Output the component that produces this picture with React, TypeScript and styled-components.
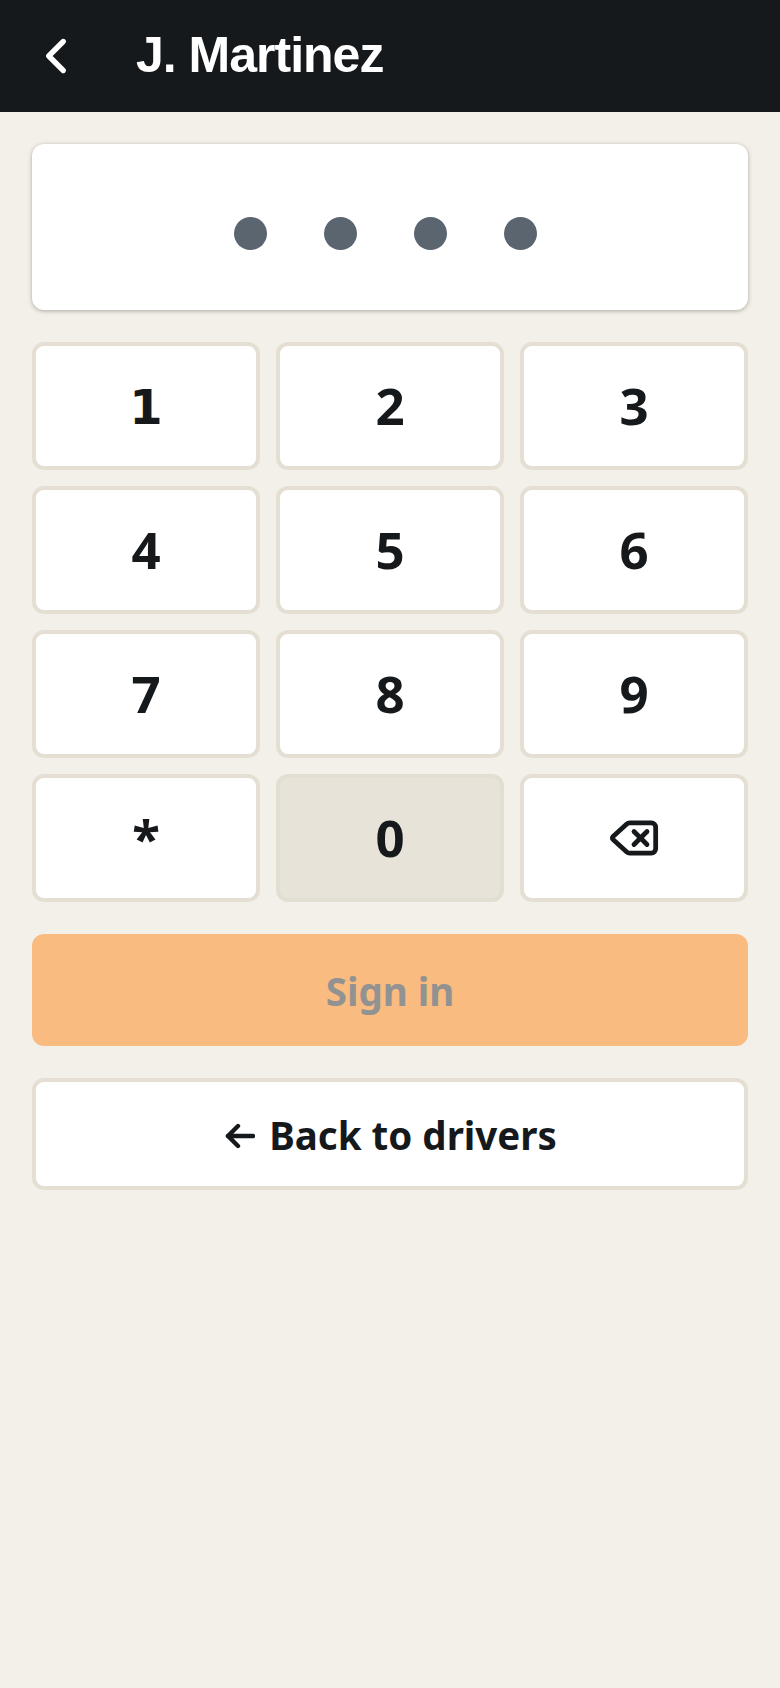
import React from "react";
import styled, { createGlobalStyle } from "styled-components";
import { ChevronLeft, Delete } from "lucide-react";

const GlobalStyle = createGlobalStyle`
  html, body {
    margin: 0;
    padding: 0;
    background: #f3f0e9;
  }

  * {
    box-sizing: border-box;
  }
`;

const Page = styled.div`
  min-height: 1688px;
  background: #f3f0e9;
  font-family: "Noto Sans", "Liberation Sans", sans-serif;
  color: #16191c;
`;

const Header = styled.header`
  height: 112px;
  background: #16191c;
  display: flex;
  align-items: center;
  padding-left: 27px;
  gap: 51px;
  color: #ffffff;
`;

const Title = styled.h1`
  margin: 0 0 2px;
  font-family: "Liberation Sans", Arial, sans-serif;
  font-size: 50px;
  font-weight: 700;
  letter-spacing: -1px;
  line-height: 56px;
`;

const Content = styled.main`
  display: flex;
  flex-direction: column;
  gap: 32px;
  padding: 32px;
`;

const PinCard = styled.div`
  height: 166px;
  background: #ffffff;
  border-radius: 12px;
  box-shadow: 0 1px 4px rgba(40, 35, 20, 0.35);
  display: flex;
  justify-content: center;
  gap: 57px;
  padding: 73px 10px 0 0;
`;

const Dot = styled.span`
  width: 33px;
  height: 33px;
  border-radius: 50%;
  background: #5a6570;
`;

const Keypad = styled.div`
  display: grid;
  grid-template-columns: repeat(3, 1fr);
  grid-auto-rows: 128px;
  gap: 16px;
`;

const Key = styled.button<{ $pressed?: boolean; $slab?: boolean }>`
  display: flex;
  align-items: center;
  justify-content: center;
  padding: ${(p) => (p.$slab ? "2px 0 0" : "0 0 3px")};
  border: 4px solid ${(p) => (p.$pressed ? "#e2ded2" : "#e4dfd2")};
  border-radius: 12px;
  background: ${(p) => (p.$pressed ? "#e7e3d8" : "#ffffff")};
  color: #16191c;
  font-family: ${(p) => (p.$slab ? '"DejaVu Sans", sans-serif' : "inherit")};
  font-size: ${(p) => (p.$slab ? "48px" : "51px")};
  font-weight: 700;
`;

const BackspaceKey = styled(Key)`
  padding: 0;
`;

const SignIn = styled.button`
  height: 112px;
  padding: 2px 0 0;
  border: none;
  border-radius: 12px;
  background: #f9bb80;
  color: #929292;
  font-family: inherit;
  font-size: 38.5px;
  font-weight: 700;
`;

const BackButton = styled.button`
  height: 112px;
  display: flex;
  align-items: center;
  justify-content: center;
  gap: 14px;
  padding: 1px 0 0 2px;
  border: 4px solid #e4dfd2;
  border-radius: 12px;
  background: #ffffff;
  color: #16191c;
  font-family: inherit;
  font-size: 38.5px;
  font-weight: 700;
`;

const ArrowIcon = styled.svg`
  width: 30px;
  height: 26px;
  margin-top: 2px;
  fill: none;
  stroke: currentColor;
  stroke-width: 4.4;
  stroke-linecap: round;
  stroke-linejoin: round;
`;

const keys = ["1", "2", "3", "4", "5", "6", "7", "8", "9", "*", "0"];

export default function App() {
  return (
    <Page>
      <GlobalStyle />
      <Header>
        <ChevronLeft size={58} strokeWidth={2.2} />
        <Title>J. Martinez</Title>
      </Header>
      <Content>
        <PinCard>
          <Dot />
          <Dot />
          <Dot />
          <Dot />
        </PinCard>
        <Keypad>
          {keys.map((k) => (
            <Key key={k} $pressed={k === "0"} $slab={k === "1"}>
              {k}
            </Key>
          ))}
          <BackspaceKey aria-label="Backspace">
            <Delete size={52} strokeWidth={2.2} />
          </BackspaceKey>
        </Keypad>
        <SignIn>Sign in</SignIn>
        <BackButton>
          <ArrowIcon viewBox="0 0 30 26">
            <path d="M28 13H3" />
            <path d="M13 3 3 13l10 10" />
          </ArrowIcon>
          Back to drivers
        </BackButton>
      </Content>
    </Page>
  );
}
